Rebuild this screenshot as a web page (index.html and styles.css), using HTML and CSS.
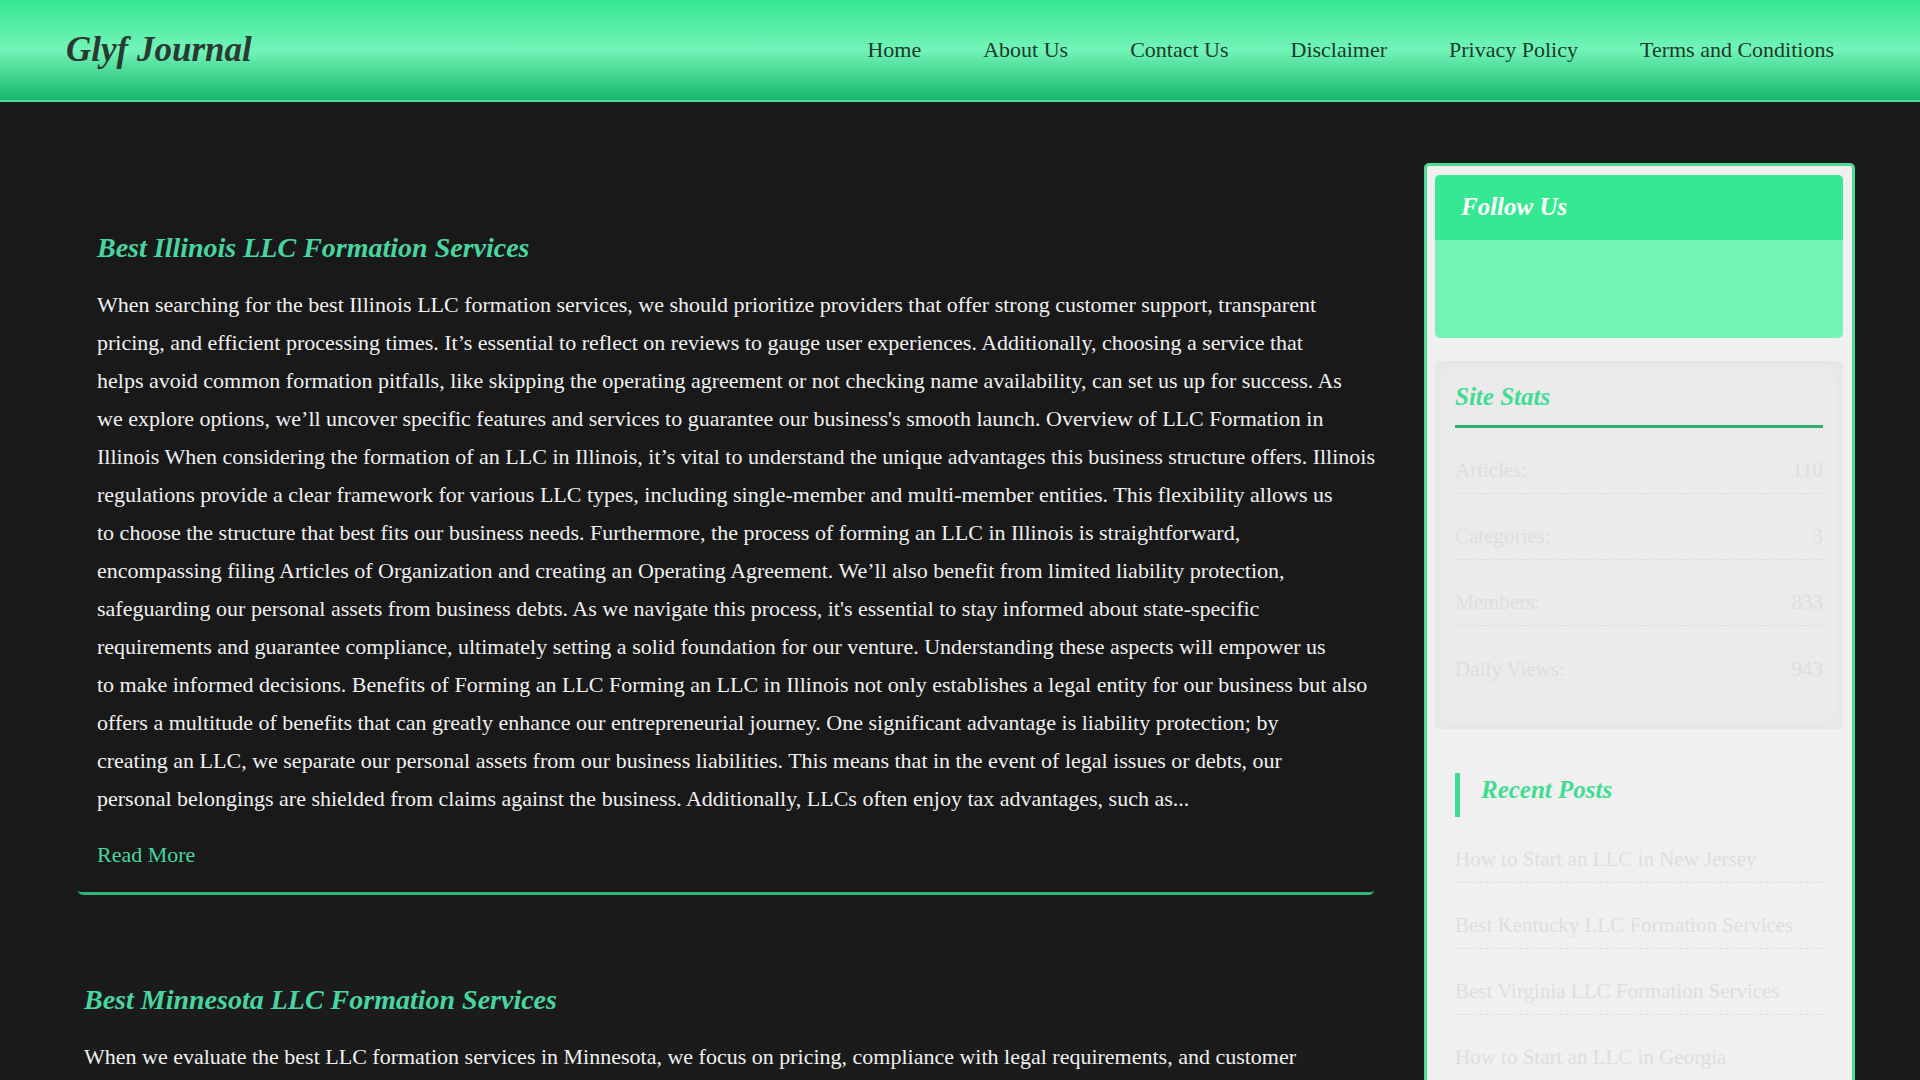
FILE: index.html
```
<!DOCTYPE html>
<html lang="en">
<head>
<meta charset="UTF-8">
<meta name="viewport" content="width=device-width, initial-scale=1.0">
<title>Glyf Journal</title>
<link rel="stylesheet" href="styles.css">
</head>
<body>

<header class="site-header">
    <a class="logo" href="#">Glyf Journal</a>
    <nav class="nav">
        <a href="#">Home</a>
        <a href="#">About Us</a>
        <a href="#">Contact Us</a>
        <a href="#">Disclaimer</a>
        <a href="#">Privacy Policy</a>
        <a href="#">Terms and Conditions</a>
    </nav>
</header>

<div class="container">

<main class="posts">
    <article class="post featured">
        <h2>Best Illinois LLC Formation Services</h2>
        <p>When searching for the best Illinois LLC formation services, we should prioritize providers that offer strong customer support, transparent<br>
        pricing, and efficient processing times. It’s essential to reflect on reviews to gauge user experiences. Additionally, choosing a service that<br>
        helps avoid common formation pitfalls, like skipping the operating agreement or not checking name availability, can set us up for success. As<br>
        we explore options, we’ll uncover specific features and services to guarantee our business's smooth launch. Overview of LLC Formation in<br>
        Illinois When considering the formation of an LLC in Illinois, it’s vital to understand the unique advantages this business structure offers. Illinois<br>
        regulations provide a clear framework for various LLC types, including single-member and multi-member entities. This flexibility allows us<br>
        to choose the structure that best fits our business needs. Furthermore, the process of forming an LLC in Illinois is straightforward,<br>
        encompassing filing Articles of Organization and creating an Operating Agreement. We’ll also benefit from limited liability protection,<br>
        safeguarding our personal assets from business debts. As we navigate this process, it's essential to stay informed about state-specific<br>
        requirements and guarantee compliance, ultimately setting a solid foundation for our venture. Understanding these aspects will empower us<br>
        to make informed decisions. Benefits of Forming an LLC Forming an LLC in Illinois not only establishes a legal entity for our business but also<br>
        offers a multitude of benefits that can greatly enhance our entrepreneurial journey. One significant advantage is liability protection; by<br>
        creating an LLC, we separate our personal assets from our business liabilities. This means that in the event of legal issues or debts, our<br>
        personal belongings are shielded from claims against the business. Additionally, LLCs often enjoy tax advantages, such as...</p>
        <a class="read-more" href="#">Read More</a>
    </article>

    <article class="post">
        <h2>Best Minnesota LLC Formation Services</h2>
        <p>When we evaluate the best LLC formation services in Minnesota, we focus on pricing, compliance with legal requirements, and customer</p>
    </article>
</main>

<aside class="sidebar">
    <section class="follow">
        <h3>Follow Us</h3>
    </section>

    <section class="stats">
        <h3>Site Stats</h3>
        <ul class="list">
            <li><span>Articles:</span><span>110</span></li>
            <li><span>Categories:</span><span>3</span></li>
            <li><span>Members:</span><span>833</span></li>
            <li><span>Daily Views:</span><span>943</span></li>
        </ul>
    </section>

    <section class="recent">
        <h3>Recent Posts</h3>
        <ul class="list">
            <li><a href="#">How to Start an LLC in New Jersey</a></li>
            <li><a href="#">Best Kentucky LLC Formation Services</a></li>
            <li><a href="#">Best Virginia LLC Formation Services</a></li>
            <li><a href="#">How to Start an LLC in Georgia</a></li>
        </ul>
    </section>
</aside>

</div>

</body>
</html>
```
FILE: styles.css
```
* {
    box-sizing: border-box;
}

body {
    margin: 0;
    font-family: "Liberation Serif", "Times New Roman", serif;
    font-size: 22px;
    line-height: 38px;
    background: #1b1b1b;
    color: #f0f0f0;
}

a {
    color: inherit;
    text-decoration: none;
}

h2, h3 {
    margin: 0;
    font-style: italic;
    font-weight: bold;
}

.site-header {
    display: flex;
    align-items: center;
    justify-content: space-between;
    height: 102px;
    padding: 0 86px 0 66px;
    background: linear-gradient(#37e892, #72f4b8 50%, #15b76a);
    border-bottom: 2px solid #50d898;
    color: #1b3a2b;
}

.logo {
    font-size: 35px;
    font-style: italic;
    font-weight: bold;
    color: #2a3a32;
}

.nav {
    display: flex;
    gap: 62px;
}

.container {
    display: grid;
    grid-template-columns: minmax(0, 1fr) 431px;
    gap: 50px;
    padding: 61px 65px 0 78px;
}

.post {
    padding: 0 6px;
}

.post h2 {
    margin-bottom: 18px;
    font-size: 28px;
    line-height: 40px;
    color: #48d6a0;
}

.post p {
    margin: 0 0 18px;
    white-space: nowrap;
}

.featured {
    margin-bottom: 85px;
    padding: 65px 19px 18px;
    background: #191919;
    border-bottom: 3px solid #2fb574;
    border-radius: 5px;
}

.read-more {
    display: block;
    color: #48d6a0;
}

.sidebar {
    padding: 9px 9px 9px 8px;
    background: #f0f0f0;
    border: 3px solid #4ddb97;
    border-radius: 5px;
}

.sidebar h3 {
    font-size: 25px;
    color: #3fdc92;
}

.follow {
    height: 163px;
    margin-bottom: 23px;
    background: #72f4b6;
    border-radius: 5px;
}

.sidebar .follow h3 {
    height: 65px;
    padding: 13px 26px;
    background: #37e892;
    border-radius: 5px 5px 0 0;
    color: #fff;
}

.stats {
    height: 368px;
    padding: 17px 20px;
    background: #ebebeb;
    border-radius: 5px;
    box-shadow: inset 0 0 15px #e3e3e3;
}

.stats h3 {
    height: 50px;
    border-bottom: 3px solid #2fae72;
}

.recent {
    padding: 44px 20px;
}

.recent h3 {
    height: 44px;
    padding-left: 21px;
    border-left: 5px solid #3fdc92;
    line-height: 34px;
}

.list {
    margin: 0;
    padding: 0;
    list-style: none;
    font-size: 21px;
    color: #dedede;
}

.list li {
    display: flex;
    align-items: flex-end;
    justify-content: space-between;
    height: 66px;
    padding-bottom: 4px;
    border-bottom: 1px dashed #dddddd;
}

.stats li:last-child {
    border-bottom: none;
}
```
